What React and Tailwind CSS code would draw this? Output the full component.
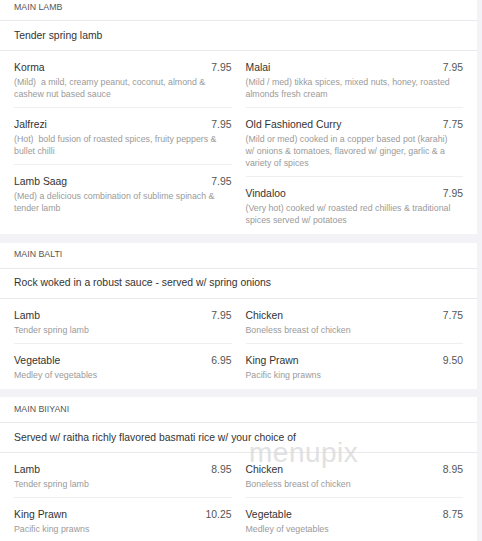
import React from 'react';

const SECTIONS = [
  {
    title: 'MAIN LAMB',
    subtitle: 'Tender spring lamb',
    left: [
      { name: 'Korma', price: '7.95', desc: ['(Mild)  a mild, creamy peanut, coconut, almond &', 'cashew nut based sauce'] },
      { name: 'Jalfrezi', price: '7.95', desc: ['(Hot)  bold fusion of roasted spices, fruity peppers &', 'bullet chilli'] },
      { name: 'Lamb Saag', price: '7.95', desc: ['(Med) a delicious combination of sublime spinach &', 'tender lamb'] },
    ],
    right: [
      { name: 'Malai', price: '7.95', desc: ['(Mild / med) tikka spices, mixed nuts, honey, roasted', 'almonds fresh cream'] },
      {
        name: 'Old Fashioned Curry',
        price: '7.75',
        desc: [
          '(Mild or med) cooked in a copper based pot (karahi)',
          'w/ onions & tomatoes, flavored w/ ginger, garlic & a',
          'variety of spices',
        ],
      },
      { name: 'Vindaloo', price: '7.95', desc: ['(Very hot) cooked w/ roasted red chillies & traditional', 'spices served w/ potatoes'] },
    ],
  },
  {
    title: 'MAIN BALTI',
    subtitle: 'Rock woked in a robust sauce - served w/ spring onions',
    left: [
      { name: 'Lamb', price: '7.95', desc: ['Tender spring lamb'] },
      { name: 'Vegetable', price: '6.95', desc: ['Medley of vegetables'] },
    ],
    right: [
      { name: 'Chicken', price: '7.75', desc: ['Boneless breast of chicken'] },
      { name: 'King Prawn', price: '9.50', desc: ['Pacific king prawns'] },
    ],
  },
  {
    title: 'MAIN BIIYANI',
    subtitle: 'Served w/ raitha richly flavored basmati rice w/ your choice of',
    left: [
      { name: 'Lamb', price: '8.95', desc: ['Tender spring lamb'] },
      { name: 'King Prawn', price: '10.25', desc: ['Pacific king prawns'] },
    ],
    right: [
      { name: 'Chicken', price: '8.95', desc: ['Boneless breast of chicken'] },
      { name: 'Vegetable', price: '8.75', desc: ['Medley of vegetables'] },
    ],
  },
];

const MenuItem = ({ item, last }) => (
  <div className={`pt-[8px] ${last ? 'pb-[8px]' : 'pb-[7px] border-b border-[#efefef]'}`}>
    <div className="flex items-center justify-between text-[10.4px] leading-[17px]">
      <span className="text-[#333333]">{item.name}</span>
      <span className="text-[#555555]">{item.price}</span>
    </div>
    <div className="text-[8.8px] leading-[12px] text-[#9a9a9a]">
      {item.desc.map((line) => (
        <span key={line} className="block whitespace-pre">
          {line}
        </span>
      ))}
    </div>
  </div>
);

const Column = ({ items }) => (
  <div className="flex flex-col">
    {items.map((item, i) => (
      <MenuItem key={item.name} item={item} last={i === items.length - 1} />
    ))}
  </div>
);

const Section = ({ section }) => (
  <section className="bg-white">
    <div className="flex h-[26px] items-center border-b border-[#e9e9ec] px-[14px] text-[8.8px] text-[#555555]">
      {section.title}
    </div>
    <div className="flex h-[30px] items-center border-b border-[#e9e9ec] px-[14px] text-[10.4px] text-[#333333]">
      {section.subtitle}
    </div>
    <div className="grid grid-cols-2 gap-x-[14px] px-[14px]">
      <Column items={section.left} />
      <Column items={section.right} />
    </div>
  </section>
);

export default function App() {
  return (
    <div className="relative h-[541px] w-[482px] overflow-hidden bg-[#f3f3f7] font-['Liberation_Sans',Arial,sans-serif]">
      <div className="mt-[-5px] flex w-[477px] flex-col gap-[8.5px]">
        {SECTIONS.map((section) => (
          <Section key={section.title} section={section} />
        ))}
      </div>
      {/* watermark */}
      <span className="pointer-events-none absolute left-[249px] top-[439px] text-[28px] leading-none tracking-[0.5px] text-[#dadada] opacity-80">
        menupix
      </span>
    </div>
  );
}
